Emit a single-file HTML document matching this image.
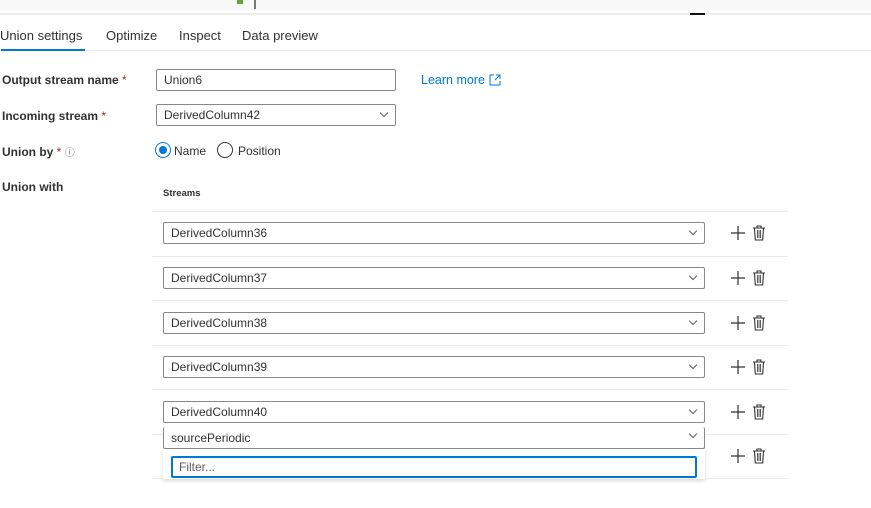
<!DOCTYPE html>
<html><head><style>
*{box-sizing:border-box;margin:0;padding:0}
body{width:871px;height:508px;background:#fff;font-family:"Liberation Sans",sans-serif;color:#323130;position:relative;overflow:hidden;font-size:12px}
.a{position:absolute}
.lbl{position:absolute;left:2px;font-size:12px;font-weight:bold;color:#323130}
.lbl span{color:#a4262c;font-weight:normal}
.inp{position:absolute;border:1px solid #8a8886;border-radius:2px;background:#fff;font-size:12px;padding-left:7px;line-height:20px;color:#323130}
.chev{position:absolute;right:8px;top:5px;width:6px;height:6px;border-right:1px solid #605e5c;border-bottom:1px solid #605e5c;transform:rotate(45deg)}
.hl{position:absolute;left:152px;width:636px;height:1px;background:#edebe9}
</style></head><body>
<div class="a" style="left:0;top:0;width:871px;height:10px;background:#f8f8f8"></div>
<div class="a" style="left:0;top:13px;width:871px;height:2px;background:#eeeeee"></div>
<div class="a" style="left:690px;top:13px;width:15px;height:2px;background:#111"></div>
<div class="a" style="left:237px;top:0;width:6px;height:4px;background:#5ea92f"></div>
<div class="a" style="left:254px;top:0;width:2px;height:9px;background:#777"></div>
<div class="a" style="left:0;top:28px;font-size:13px;color:#323130">Union settings</div>
<div class="a" style="left:106px;top:28px;font-size:13px;color:#323130">Optimize</div>
<div class="a" style="left:179px;top:28px;font-size:13px;color:#323130">Inspect</div>
<div class="a" style="left:242px;top:28px;font-size:13px;color:#323130">Data preview</div>
<div class="a" style="left:0;top:50px;width:871px;height:1px;background:#edebe9"></div>
<div class="a" style="left:1px;top:49px;width:84px;height:2px;background:#0078d4"></div>
<div class="lbl" style="top:73px">Output stream name <span>*</span></div>
<div class="inp" style="left:156px;top:69px;width:240px;height:22px">Union6</div>
<div class="a" style="left:421px;top:73px;color:#0078d4;font-size:12.5px">Learn more</div>
<svg class="a" style="left:489px;top:74px" width="12" height="12" viewBox="0 0 12 12"><path d="M5 1H1v10h10V7M7 1h4v4M11 1L6 6" fill="none" stroke="#0078d4" stroke-width="1"/></svg>
<div class="lbl" style="top:109px">Incoming stream <span>*</span></div>
<div class="inp" style="left:156px;top:104px;width:240px;height:22px">DerivedColumn42<div class="chev"></div></div>
<div class="lbl" style="top:144px">Union by <span>*</span> <span style="color:#605e5c;font-size:10px">ⓘ</span></div>
<div class="a" style="left:155px;top:142px;width:16px;height:16px;border:1px solid #0078d4;border-radius:50%"></div>
<div class="a" style="left:159px;top:146px;width:8px;height:8px;background:#0078d4;border-radius:50%"></div>
<div class="a" style="left:174px;top:144px;font-size:12px">Name</div>
<div class="a" style="left:217px;top:142px;width:16px;height:16px;border:1px solid #323130;border-radius:50%"></div>
<div class="a" style="left:238px;top:144px;font-size:12px">Position</div>
<div class="lbl" style="top:180px">Union with</div>
<div class="a" style="left:163px;top:188px;font-size:9.5px;font-weight:bold">Streams</div>
<div class="hl" style="top:211px"></div>
<div class="hl" style="top:256px"></div>
<div class="hl" style="top:300px"></div>
<div class="hl" style="top:345px"></div>
<div class="hl" style="top:389px"></div>
<div class="hl" style="top:434px"></div>
<div class="hl" style="top:478px"></div>

<div class="inp" style="left:163px;top:222px;width:542px;height:22px">DerivedColumn36<div class="chev"></div></div>
<div class="inp" style="left:163px;top:267px;width:542px;height:22px">DerivedColumn37<div class="chev"></div></div>
<div class="inp" style="left:163px;top:312px;width:542px;height:22px">DerivedColumn38<div class="chev"></div></div>
<div class="inp" style="left:163px;top:356px;width:542px;height:22px">DerivedColumn39<div class="chev"></div></div>
<div class="inp" style="left:163px;top:401px;width:542px;height:22px">DerivedColumn40<div class="chev"></div></div>
<div class="inp" style="left:163px;top:427px;width:542px;height:22px;border-top:none;line-height:22px;overflow:hidden"><div style="margin-top:0">sourcePeriodic</div><div class="chev" style="top:4px"></div></div>
<div class="a" style="left:163px;top:449px;width:542px;height:30px;background:#fff;box-shadow:0 2px 4px rgba(0,0,0,.15)"></div>
<div class="inp" style="left:171px;top:456px;width:526px;height:22px;border:2px solid #0078d4;padding-left:6px;line-height:18px;color:#605e5c">Filter...</div>

<svg width="0" height="0" style="position:absolute"><defs><g id="ic"><path d="M1 8h14M8 1v14" stroke="#323130" stroke-width="1.2"/><g transform="translate(22,0)"><path d="M1 3h12M5 3V1h4v2M2.5 3l.8 12h7.4l.8-12" fill="none" stroke="#323130" stroke-width="1.1"/><path d="M5.5 5v8M7 5v8M8.5 5v8" stroke="#323130" stroke-width=".8"/></g></g></defs></svg>
<svg class="a" style="left:730px;top:225px" width="40" height="17"><use href="#ic"/></svg>
<svg class="a" style="left:730px;top:270px" width="40" height="17"><use href="#ic"/></svg>
<svg class="a" style="left:730px;top:315px" width="40" height="17"><use href="#ic"/></svg>
<svg class="a" style="left:730px;top:359px" width="40" height="17"><use href="#ic"/></svg>
<svg class="a" style="left:730px;top:404px" width="40" height="17"><use href="#ic"/></svg>
<svg class="a" style="left:730px;top:448px" width="40" height="17"><use href="#ic"/></svg>
</body></html>
